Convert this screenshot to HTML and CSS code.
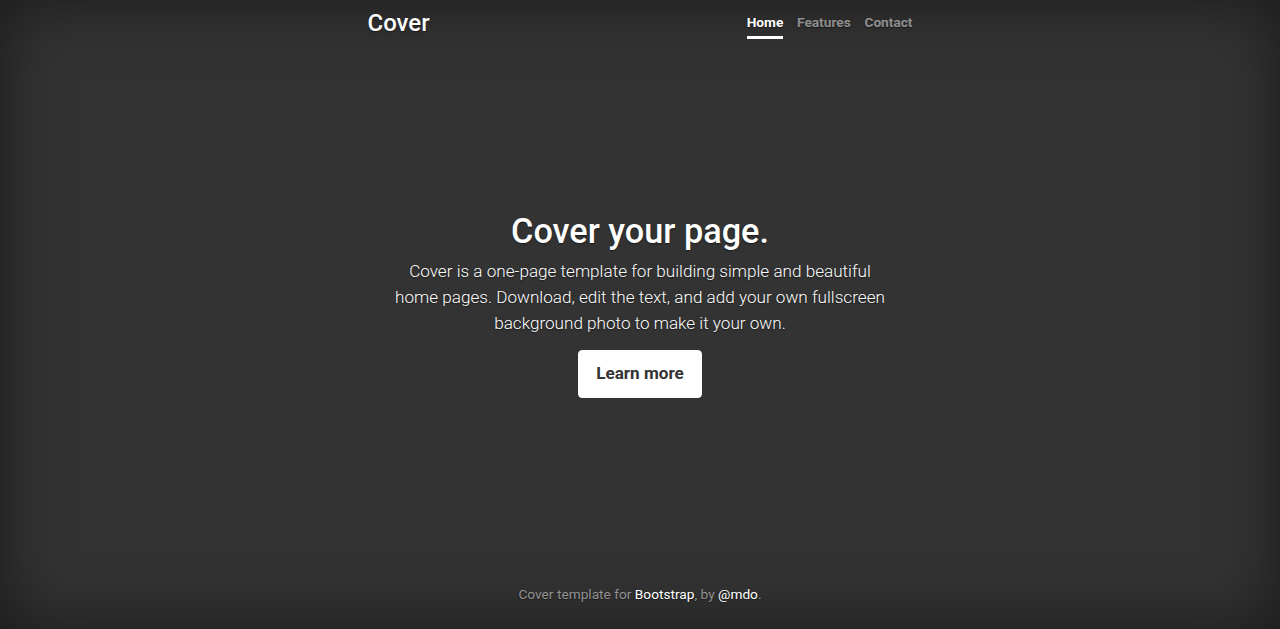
FILE: index.html
```html
<!DOCTYPE html>
<html lang="en">
<head>
<meta charset="utf-8">
<title>Cover Template</title>
<link rel="stylesheet" href="styles.css">
</head>
<body class="text-center">
<div class="cover-container">
  <header class="masthead">
    <div class="inner">
      <h3 class="masthead-brand">Cover</h3>
      <nav class="nav-masthead">
        <a class="nav-link active" href="#">Home</a>
        <a class="nav-link" href="#">Features</a>
        <a class="nav-link" href="#">Contact</a>
      </nav>
    </div>
  </header>
  <main class="inner cover">
    <h1 class="cover-heading">Cover your page.</h1>
    <p class="lead">Cover is a one-page template for building simple and beautiful home pages. Download, edit the text, and add your own fullscreen background photo to make it your own.</p>
    <p class="lead"><a href="#" class="btn">Learn more</a></p>
  </main>
  <footer class="mastfoot">
    <div class="inner">
      <p>Cover template for <a href="#">Bootstrap</a>, by <a href="#">@mdo</a>.</p>
    </div>
  </footer>
</div>
</body>
</html>
```
FILE: styles.css
```css
html, body {
  height: 100%;
  margin: 0;
  background-color: #333;
}
html { font-size: 13.7px; }
body {
  display: flex;
  color: #fff;
  font-family: Roboto, "Liberation Sans", Arial, sans-serif;
  font-size: 1rem;
  line-height: 1.5;
  text-shadow: 0 0.05rem 0.1rem rgba(0, 0, 0, 0.5);
  box-shadow: inset 0 0 5rem rgba(0, 0, 0, 0.5);
}
.text-center { text-align: center; }
a, a:focus, a:hover { color: #fff; text-decoration: none; }

.cover-container {
  display: flex;
  flex-direction: column;
  width: 100%;
  max-width: 545px;
  height: 100%;
  margin: 0 auto;
  padding: 8.5px 0 10.5px;
  box-sizing: border-box;
}

.masthead { margin-bottom: auto; }
.masthead .inner {
  display: flex;
  justify-content: space-between;
  align-items: flex-start;
}
.masthead-brand {
  margin: 0;
  font-size: 1.75rem;
  font-weight: 500;
  line-height: 1.2;
}
.nav-masthead { display: flex; }
.nav-masthead .nav-link {
  display: block;
  padding: 0.25rem 0;
  font-weight: 700;
  color: rgba(255, 255, 255, 0.5);
  border-bottom: 3px solid transparent;
}
.nav-masthead .nav-link + .nav-link { margin-left: 1rem; }
.nav-masthead .active {
  color: #fff;
  border-bottom-color: #fff;
}

.cover { padding: 0 1.5rem; }
.cover-heading {
  margin: 0 0 0.5rem;
  font-size: 2.5rem;
  font-weight: 500;
  line-height: 1.2;
}
.lead {
  margin: 0 0 1rem;
  font-size: 1.25rem;
  font-weight: 300;
  line-height: 1.5;
}
.btn {
  display: inline-block;
  padding: 0.75rem 1.25rem;
  font-size: 1.25rem;
  line-height: 1.5;
  font-weight: 700;
  color: #333;
  text-shadow: none;
  background-color: #fff;
  border: 0.05rem solid #fff;
  border-radius: 0.3rem;
}
.btn:hover, .btn:focus { color: #333; }

.mastfoot {
  margin-top: auto;
  color: rgba(255, 255, 255, 0.5);
}
.mastfoot p { margin: 0 0 1rem; }
```
